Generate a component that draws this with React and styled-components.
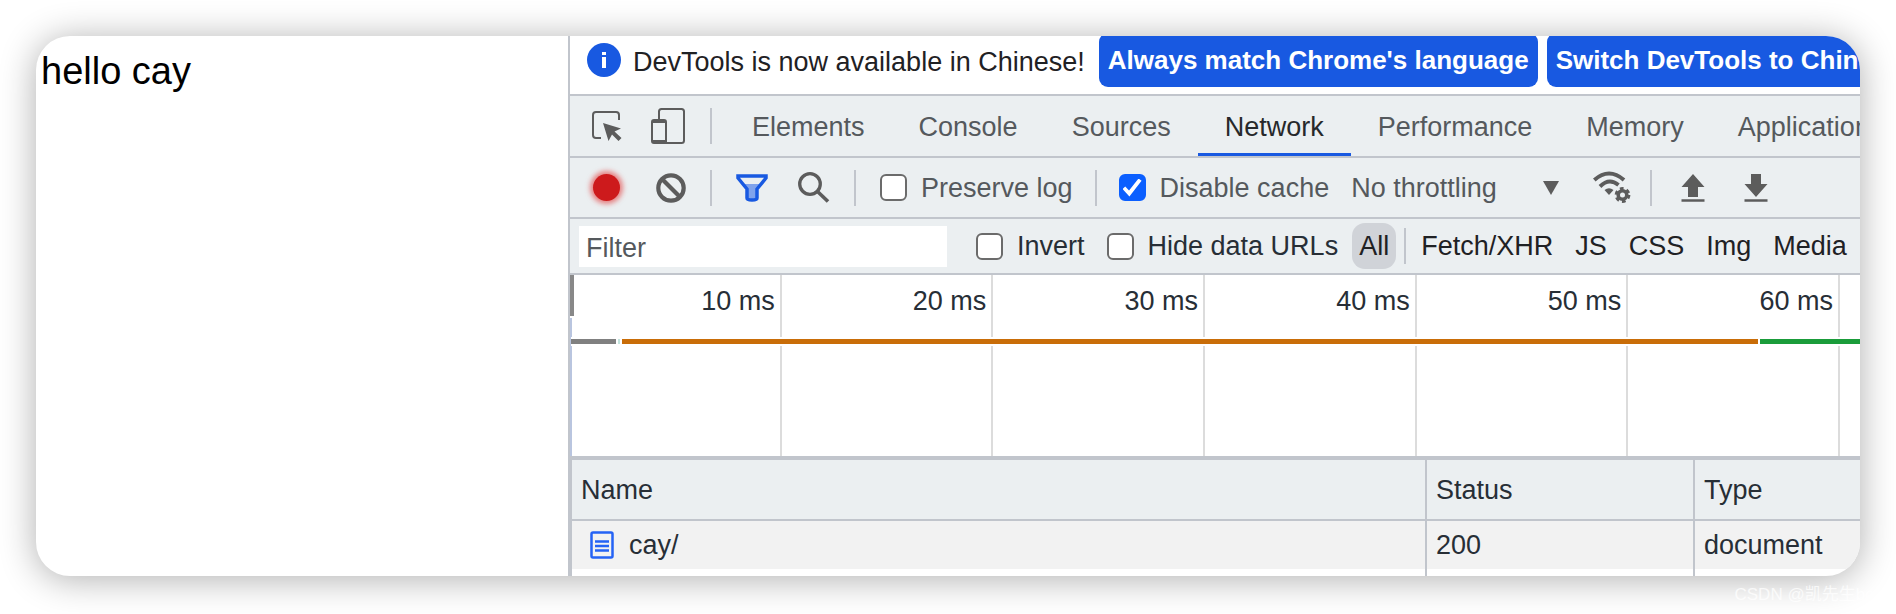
import React from 'react';
import styled, { createGlobalStyle, css } from 'styled-components';

const line = '#c1c5cc';
const surface = '#ebeff1';
const blue = '#1859e1';
const grey = '#5c5c5c';

const tabs = ['Elements', 'Console', 'Sources', 'Network', 'Performance', 'Memory', 'Application'];
const types = ['Fetch/XHR', 'JS', 'CSS', 'Img', 'Media'];
const ticks = ['10 ms', '20 ms', '30 ms', '40 ms', '50 ms', '60 ms'];

function InspectIcon() {
  return (
    <svg width="30" height="30" viewBox="0 0 30 30" aria-hidden="true">
      <path d="M9 27H4Q1 27 1 24V4Q1 1 4 1H24Q27 1 27 4V9" fill="none" stroke={grey} strokeWidth="2" />
      <path d="M11 12L29 17.5L22.5 20.5L29.500 27L26.5 30L20 23.500L16.5 30Z" fill={grey} />
    </svg>
  );
}

function DeviceIcon() {
  return (
    <svg width="34" height="36" viewBox="0 0 34 36" aria-hidden="true">
      <path d="M8 11V3.5Q8 1 10.5 1H30.5Q33 1 33 3.5V32.5Q33 35 30.5 35H15" fill="none" stroke={grey} strokeWidth="2" />
      <path fillRule="evenodd" d="M3 11H13Q16 11 16 14V36H3Q0 36 0 33V14Q0 11 3 11ZM2 15V32H14V15Z" fill={grey} />
    </svg>
  );
}

function ClearIcon() {
  return (
    <svg width="30" height="30" viewBox="0 0 30 30" aria-hidden="true">
      <circle cx="15" cy="15" r="12.7" fill="none" stroke={grey} strokeWidth="4.2" />
      <path d="M6 6L24 24" stroke={grey} strokeWidth="4.2" />
    </svg>
  );
}

function FunnelIcon() {
  return (
    <svg width="32" height="28" viewBox="0 0 32 28" aria-hidden="true">
      <path d="M7 10H25L20 16V25Q16 27 12 25V16Z" fill="#80a3ec" />
      <path d="M2 2H30V4L21 15V24Q21 26 16 26Q11 26 11 24V15L2 4Z" fill="none" stroke={blue} strokeWidth="3.5" />
    </svg>
  );
}

function SearchIcon() {
  return (
    <svg width="32" height="31" viewBox="0 0 32 31" aria-hidden="true">
      <circle cx="12" cy="12" r="10.3" fill="none" stroke={grey} strokeWidth="3.3" />
      <path d="M19 19L30 29.5" stroke={grey} strokeWidth="3.6" />
    </svg>
  );
}

function WifiIcon() {
  return (
    <svg width="38" height="33" viewBox="0 0 38 33" aria-hidden="true">
      <path d="M1.3 9Q16 -4 31 9" fill="none" stroke={grey} strokeWidth="3.9" />
      <path d="M7 15.5Q16 6.5 25.5 14" fill="none" stroke={grey} strokeWidth="3.9" />
      <path d="M11.5 19Q16 15.5 20.5 19L16 24Z" fill={grey} />
      <circle cx="29.5" cy="24" r="4.3" fill="none" stroke={grey} strokeWidth="3.6" />
      <circle cx="29.5" cy="24" r="6.3" fill="none" stroke={grey} strokeWidth="3.2" strokeDasharray="3.6 3" />
    </svg>
  );
}

function TransferIcon({ down }) {
  return (
    <svg width="24" height="28" viewBox="0 0 24 28" aria-hidden="true">
      <path d={down ? 'M7 0H17V10H23.5L12 23L0.5 10H7Z' : 'M12 0L23.5 13H17V23H7V13H0.5Z'} fill={grey} />
      <path d="M0.5 26.5H23.5" stroke={grey} strokeWidth="2.5" />
    </svg>
  );
}

function DocumentIcon() {
  return (
    <svg width="24" height="28" viewBox="0 0 24 28" aria-hidden="true">
      <rect x="1.5" y="1.5" width="21" height="25" rx="1.5" fill="none" stroke="#2563f5" strokeWidth="2.5" />
      <path d="M5 10.5H19M5 15H19M5 19.5H19" stroke="#2563f5" strokeWidth="2.3" />
    </svg>
  );
}

export default function App() {
  return (
    <Page>
      <GlobalStyle />
      <Card>
        <Preview>hello cay</Preview>
        <DevTools>
          <InfoBar>
            <InfoBadge viewBox="0 0 34 34" aria-hidden="true">
              <circle cx="17" cy="17" r="17" fill={blue} />
              <path d="M15 9H19V12H15ZM15 14H19V25H15Z" fill="#fff" />
            </InfoBadge>
            <InfoText>DevTools is now available in Chinese!</InfoText>
            <InfoButton>Always match Chrome's language</InfoButton>
            <InfoButton>Switch DevTools to Chinese</InfoButton>
          </InfoBar>

          <TabBar>
            <Group $gap="29px">
              <IconButton aria-label="Inspect element"><InspectIcon /></IconButton>
              <IconButton aria-label="Toggle device toolbar"><DeviceIcon /></IconButton>
            </Group>
            <Separator />
            <Tabs role="tablist">
              {tabs.map((tab) => (
                <Tab key={tab} role="tab" aria-selected={tab === 'Network'} $active={tab === 'Network'}>{tab}</Tab>
              ))}
            </Tabs>
          </TabBar>

          <Toolbar>
            <Group $gap="36px">
              <RecordButton aria-label="Stop recording" />
              <IconButton aria-label="Clear"><ClearIcon /></IconButton>
            </Group>
            <Separator />
            <Group $gap="30px">
              <IconButton aria-label="Filter"><FunnelIcon /></IconButton>
              <IconButton aria-label="Search"><SearchIcon /></IconButton>
            </Group>
            <Separator />
            <Group $gap="22px">
              <CheckLabel><Checkbox />Preserve log</CheckLabel>
              <Separator />
              <CheckLabel><Checkbox defaultChecked />Disable cache</CheckLabel>
              <SelectBox>
                <Throttling aria-label="Throttling"><option>No throttling</option></Throttling>
                <svg width="16" height="14" viewBox="0 0 16 14" aria-hidden="true"><path d="M0 0H16L8 14Z" fill={grey} /></svg>
              </SelectBox>
            </Group>
            <NetworkTools>
              <IconButton aria-label="Network conditions"><WifiIcon /></IconButton>
              <Separator />
            </NetworkTools>
            <Group $gap="39px">
              <IconButton aria-label="Import HAR file"><TransferIcon /></IconButton>
              <IconButton aria-label="Export HAR file"><TransferIcon down /></IconButton>
            </Group>
          </Toolbar>

          <FilterBar>
            <FilterInput placeholder="Filter" aria-label="Filter" />
            <Group $gap="22px">
              <CheckLabel $dark><Checkbox />Invert</CheckLabel>
              <CheckLabel $dark><Checkbox />Hide data URLs</CheckLabel>
            </Group>
            <TypeList>
              <TypeButton $active>All</TypeButton>
              <Separator />
              {types.map((type) => <TypeButton key={type}>{type}</TypeButton>)}
            </TypeList>
          </FilterBar>

          <Timeline>
            {ticks.map((tick) => <Tick key={tick}>{tick}</Tick>)}
            <Handle />
            <StartLine />
            <Activity>
              <Segment $size="45px" $color="#808080" />
              <Segment $size="2px" $color="#c3e4de" />
              <Segment $size="1138px" $grow $color="#c96d08" />
              <Segment $size="100px" $color="#1a9c3a" />
            </Activity>
          </Timeline>

          <Requests>
            <colgroup>
              <col />
              <StatusCol />
              <TypeCol />
            </colgroup>
            <thead>
              <tr><HeadCell>Name</HeadCell><HeadCell>Status</HeadCell><HeadCell>Type</HeadCell></tr>
            </thead>
            <tbody>
              <tr>
                <Cell><FileName><DocumentIcon />cay/</FileName></Cell>
                <Cell>200</Cell>
                <Cell>document</Cell>
              </tr>
              <SpareRow><td /><td /><td /></SpareRow>
            </tbody>
          </Requests>
        </DevTools>
      </Card>
      <Watermark>CSDN @凯先生boo</Watermark>
    </Page>
  );
}

const GlobalStyle = createGlobalStyle`
  * {
    box-sizing: border-box;
  }
  body {
    margin: 0;
    background: #fff;
    font-family: "Liberation Sans", "Noto Sans CJK SC", sans-serif;
  }
  button, input, select {
    font: inherit;
    color: inherit;
  }
`;

const Page = styled.div`
  position: relative;
  padding: 36px 36px 38px;
  overflow: hidden;
`;

const Card = styled.main`
  display: grid;
  grid-template-columns: 532fr 1292fr;
  overflow: hidden;
  border-radius: 34px;
  background: #fff;
  box-shadow: 0 3px 36px rgba(0, 0, 0, 0.32);
  font-size: 27px;
  line-height: 32px;
  color: #272e36;
`;

const Preview = styled.section`
  padding: 14px 5px;
  font-size: 38px;
  line-height: 42px;
  color: #000;
`;

const DevTools = styled.section`
  min-width: 0;
  border-left: 2px solid ${line};
`;

const bar = css`
  display: flex;
  align-items: center;
  overflow: hidden;
  white-space: nowrap;
  border-bottom: 2px solid ${line};
`;

const InfoBar = styled.div`
  ${bar}
  height: 60px;
  padding: 0 0 7px 17px;
  align-items: flex-end;
  color: #1f2124;
`;

const InfoBadge = styled.svg`
  flex: none;
  width: 34px;
  height: 34px;
  margin-bottom: 10px;
`;

const InfoText = styled.span`
  margin: 0 14px 9px 12px;
`;

const InfoButton = styled.button`
  flex: none;
  height: 54px;
  margin-right: 9px;
  padding: 0 9px;
  border: 0;
  border-radius: 9px;
  background: ${blue};
  color: #fff;
  font-size: 26px;
  font-weight: 700;
`;

const TabBar = styled.div`
  ${bar}
  height: 62px;
  padding-left: 22px;
  background: ${surface};

  > span {
    margin-left: 25px;
  }
`;

const Group = styled.div`
  display: flex;
  flex: none;
  align-items: center;
  gap: ${(props) => props.$gap};
`;

const IconButton = styled.button`
  display: flex;
  flex: none;
  padding: 0;
  border: 0;
  background: none;
`;

const Separator = styled.span`
  flex: none;
  width: 2px;
  height: 36px;
  background: ${line};
`;

const Tabs = styled.div`
  display: flex;
  align-self: stretch;
  margin-left: 13px;
`;

const Tab = styled.button`
  padding: 4px 27px 0;
  border: 0;
  border-bottom: 3px solid ${(props) => (props.$active ? blue : 'transparent')};
  background: none;
  color: ${(props) => (props.$active ? '#27292b' : '#55595d')};
`;

const Toolbar = styled.div`
  ${bar}
  height: 61px;
  padding-left: 23px;
  gap: 24px;
  background: ${surface};
`;

const RecordButton = styled.button`
  width: 27px;
  height: 27px;
  padding: 0;
  border: 0;
  border-radius: 50%;
  background: #cd1a1c;
  box-shadow: 0 0 5px 3px rgba(225, 40, 40, 0.55);
`;

const CheckLabel = styled.label`
  display: flex;
  align-items: center;
  gap: 14px;
  color: ${(props) => (props.$dark ? '#272e36' : '#55595d')};
`;

const Checkbox = styled.input.attrs({ type: 'checkbox' })`
  appearance: none;
  display: grid;
  place-items: center;
  width: 27px;
  height: 27px;
  margin: 0;
  border: 2px solid #6b6b6b;
  border-radius: 6px;
  background: #fff;

  &:checked {
    border-color: #0b5fff;
    background: #0b5fff;
  }
  &:checked::after {
    content: '';
    width: 19px;
    height: 18px;
    background: #fff;
    clip-path: polygon(0 58%, 14% 44%, 34% 66%, 84% 0, 100% 12%, 36% 100%);
  }
`;

const SelectBox = styled.div`
  display: flex;
  align-items: center;
  gap: 46px;
`;

const Throttling = styled.select`
  appearance: none;
  padding: 0;
  border: 0;
  background: none;
  color: #55595d;
`;

const NetworkTools = styled.div`
  display: flex;
  align-items: center;
  gap: 19px;
  padding: 0 5px 0 10px;
`;

const FilterBar = styled.div`
  ${bar}
  height: 56px;
  padding-left: 9px;
  background: ${surface};
`;

const FilterInput = styled.input`
  width: 368px;
  height: 41px;
  margin-right: 29px;
  padding: 4px 7px 0;
  border: 0;
  background: #fff;

  &::placeholder {
    color: #55595d;
    opacity: 1;
  }
`;

const TypeList = styled.div`
  display: flex;
  align-items: center;
  gap: 8px;
  margin-left: 14px;
  color: #1f2124;
`;

const TypeButton = styled.button`
  height: 46px;
  padding: 0 7px;
  border: 0;
  border-radius: 13px;
  background: ${(props) => (props.$active ? '#d0d3d8' : 'transparent')};
`;

const Timeline = styled.div`
  position: relative;
  display: grid;
  grid-template-columns: repeat(6, 1fr) 20px;
  height: 185px;
  border-bottom: 4px solid ${line};
`;

const Tick = styled.div`
  padding: 10px 5px 0 0;
  border-right: 2px solid #dcdcdc;
  text-align: right;
`;

const Handle = styled.span`
  position: absolute;
  top: 0;
  left: 0;
  width: 4px;
  height: 41px;
  background: #888;
`;

const StartLine = styled.span`
  position: absolute;
  top: 43px;
  bottom: 0;
  left: 0;
  width: 2px;
  background: #b9c5df;
`;

const Activity = styled.div`
  position: absolute;
  top: 62px;
  left: 1px;
  right: 0;
  display: flex;
  gap: 2px;
  padding: 2px 0;
  background: #fff;
`;

const Segment = styled.span`
  flex: ${(props) => (props.$grow ? 1 : 0)} 1 ${(props) => props.$size};
  height: 5px;
  background: ${(props) => props.$color};
`;

const Requests = styled.table`
  width: 100%;
  table-layout: fixed;
  border-collapse: separate;
  border-spacing: 0;
  border-left: 2px solid ${line};

  td + td, th + th {
    border-left: 2px solid ${line};
  }
`;

const StatusCol = styled.col`
  width: 268px;
`;

const TypeCol = styled.col`
  width: 167px;
`;

const HeadCell = styled.th`
  height: 61px;
  padding: 0 9px;
  border-bottom: 2px solid ${line};
  background: ${surface};
  font-weight: 400;
  text-align: left;
`;

const Cell = styled.td`
  height: 48px;
  padding: 0 9px;
  background: #f2f2f2;
`;

const FileName = styled.span`
  display: flex;
  align-items: center;
  gap: 15px;
  padding-left: 9px;
`;

const SpareRow = styled.tr`
  height: 7px;

  td {
    padding: 0;
  }
`;

const Watermark = styled.div`
  position: absolute;
  right: 12px;
  bottom: 8px;
  font-size: 17px;
  line-height: 22px;
  color: rgba(255, 255, 255, 0.75);
`;
